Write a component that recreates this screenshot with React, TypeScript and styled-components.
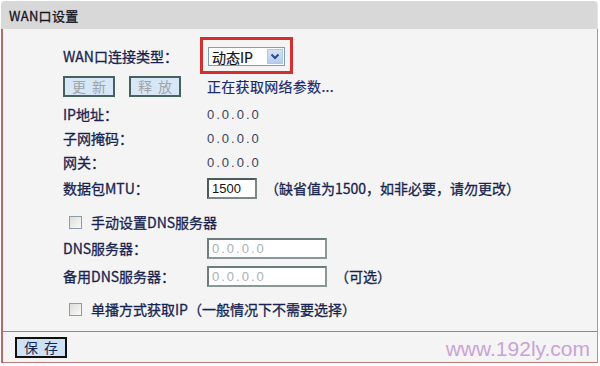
import React from "react";
import styled, { createGlobalStyle } from "styled-components";

const Global = createGlobalStyle`
  html, body { margin: 0; padding: 0; background: #ffffff; }
  body { font-family: "Noto Sans CJK SC", "Liberation Sans", sans-serif; }
`;

const Frame = styled.div`
  width: 597px;
  margin: 1px 0 0 1px;
  display: flex;
  flex-direction: column;
`;

const Header = styled.div`
  height: 28px;
  background: #d8d8d8;
  border-radius: 4px 4px 0 0;
  border-right: 1px solid #e6e6e6;
  display: flex;
  align-items: center;
  padding-left: 8px;
  font-size: 13px;
  color: #15151f;
  -webkit-text-stroke: 0.3px #15151f;
  letter-spacing: 0.3px;
`;

const Body = styled.div`
  background: #f4f4f4;
  border-left: 2px solid #b46a66;
  border-right: 1px solid #c48a8a;
  display: flex;
  flex-direction: column;
`;

const Form = styled.div`
  display: flex;
  flex-direction: column;
  padding: 8px 0 10px 60px;
  border-bottom: 1px solid #c87070;
`;

const Row = styled.div<{ $h?: number; $mt?: number }>`
  display: grid;
  grid-template-columns: 144px auto;
  align-items: center;
  height: ${(p) => p.$h ?? 24}px;
  margin-top: ${(p) => p.$mt ?? 0}px;
  font-size: 14px;
  color: #18244f;
`;

const CheckRow = styled.div<{ $mt?: number }>`
  display: flex;
  align-items: center;
  height: 24px;
  margin-top: ${(p) => p.$mt ?? 0}px;
  padding-left: 6px;
  gap: 9px;
  font-size: 14px;
  color: #18244f;
`;

const Label = styled.span`
  white-space: nowrap;
  -webkit-text-stroke: 0.3px #18244f;
`;

const Value = styled.span`
  font-family: "Liberation Sans", sans-serif;
  font-size: 13px;
  letter-spacing: 2px;
  color: #3a4160;
`;

const Cell = styled.div`
  display: flex;
  align-items: center;
  gap: 8px;
  white-space: nowrap;
`;

const Highlight = styled.div`
  margin-left: -7px;
  border: 3px solid #d22f2f;
  padding: 7px 5px 5px 5px;
  display: flex;
  width: fit-content;
`;

const Select = styled.div`
  width: 72px;
  height: 17px;
  border: 1px solid #7f9db9;
  background: #ffffff;
  display: flex;
  align-items: center;
  justify-content: space-between;
  padding-left: 3px;
  font-size: 14px;
  color: #111111;
  -webkit-text-stroke: 0.2px #111111;
`;

const Arrow = styled.div`
  width: 16px;
  height: 15px;
  margin-right: 1px;
  background: linear-gradient(#d5e2f6, #b7ccee);
  border: 1px solid #b3c6e6;
  box-sizing: border-box;
  display: flex;
  align-items: center;
  justify-content: center;
`;

const ButtonPair = styled.div`
  display: flex;
  gap: 14px;
`;

const Button = styled.button<{ $disabled?: boolean; $w?: number }>`
  width: ${(p) => p.$w ?? 52}px;
  height: 21px;
  box-sizing: border-box;
  border: 2px solid ${(p) => (p.$disabled ? "#47615f" : "#111111")};
  background: ${(p) => (p.$disabled ? "#d7e7f6" : "#cfe1f4")};
  color: ${(p) => (p.$disabled ? "#9da3ab" : "#18244f")};
  font-family: "Noto Sans CJK SC", sans-serif;
  font-size: 14px;
  letter-spacing: 6px;
  padding: 0 0 0 6px;
  line-height: 17px;
  display: flex;
  align-items: center;
  justify-content: center;
`;

const Status = styled.span`
  color: #1a2b70;
  letter-spacing: 0.3px;
  -webkit-text-stroke: 0.2px #1a2b70;
`;

const Input = styled.div<{ $w: number; $disabled?: boolean }>`
  width: ${(p) => p.$w}px;
  height: 21px;
  box-sizing: border-box;
  border: 2px solid ${(p) => (p.$disabled ? "#6d7c7c" : "#4b5a5a")};
  border-right-color: ${(p) => (p.$disabled ? "#8a9898" : "#7a8888")};
  border-bottom-color: ${(p) => (p.$disabled ? "#8a9898" : "#7a8888")};
  background: #ffffff;
  display: flex;
  align-items: center;
  padding-left: 3px;
  font-family: "Liberation Sans", sans-serif;
  font-size: 13px;
  letter-spacing: ${(p) => (p.$disabled ? "2px" : "0")};
  color: ${(p) => (p.$disabled ? "#aab0b4" : "#111111")};
`;

const Note = styled.span`
  color: #18244f;
  -webkit-text-stroke: 0.3px #18244f;
`;

const Check = styled.span`
  width: 13px;
  height: 13px;
  box-sizing: border-box;
  border: 1px solid #8d9cab;
  background: linear-gradient(135deg, #dcdcd8, #fbfbfa);
  display: inline-block;
`;

const Footer = styled.div`
  height: 30px;
  display: flex;
  align-items: center;
  justify-content: space-between;
  padding: 0 7px 0 12px;
  border-bottom: 1px solid #c07878;
`;

const Watermark = styled.span`
  font-family: "Liberation Sans", Arial, sans-serif;
  font-size: 21px;
  color: #c9a3d6;
  margin-top: 4px;
`;

const Chevron = () => (
  <svg width="10" height="7" viewBox="0 0 10 7">
    <path d="M1.5 1.5 L5 5 L8.5 1.5" fill="none" stroke="#2b4a8c" strokeWidth="2" />
  </svg>
);

export default function App() {
  return (
    <>
      <Global />
      <Frame>
        <Header>WAN口设置</Header>
        <Body>
          <Form>
            <Row $h={36}>
              <Label>WAN口连接类型：</Label>
              <Highlight>
                <Select>
                  <span>动态IP</span>
                  <Arrow>
                    <Chevron />
                  </Arrow>
                </Select>
              </Highlight>
            </Row>
            <Row $mt={1}>
              <ButtonPair>
                <Button $disabled>更新</Button>
                <Button $disabled>释放</Button>
              </ButtonPair>
              <Status>正在获取网络参数...</Status>
            </Row>
            <Row $mt={4}>
              <Label>IP地址：</Label>
              <Value>0.0.0.0</Value>
            </Row>
            <Row>
              <Label>子网掩码：</Label>
              <Value>0.0.0.0</Value>
            </Row>
            <Row>
              <Label>网关：</Label>
              <Value>0.0.0.0</Value>
            </Row>
            <Row $mt={2}>
              <Label>数据包MTU：</Label>
              <Cell>
                <Input $w={50}>1500</Input>
                <Note>（缺省值为1500，如非必要，请勿更改）</Note>
              </Cell>
            </Row>
            <CheckRow $mt={10}>
              <Check />
              <Label>手动设置DNS服务器</Label>
            </CheckRow>
            <Row $mt={2}>
              <Label>DNS服务器：</Label>
              <Input $w={120} $disabled>0.0.0.0</Input>
            </Row>
            <Row $mt={4}>
              <Label>备用DNS服务器：</Label>
              <Cell>
                <Input $w={120} $disabled>0.0.0.0</Input>
                <Note>（可选）</Note>
              </Cell>
            </Row>
            <CheckRow $mt={9}>
              <Check />
              <Label>单播方式获取IP（一般情况下不需要选择）</Label>
            </CheckRow>
          </Form>
          <Footer>
            <Button $w={52}>保存</Button>
            <Watermark>www.192ly.com</Watermark>
          </Footer>
        </Body>
      </Frame>
    </>
  );
}
